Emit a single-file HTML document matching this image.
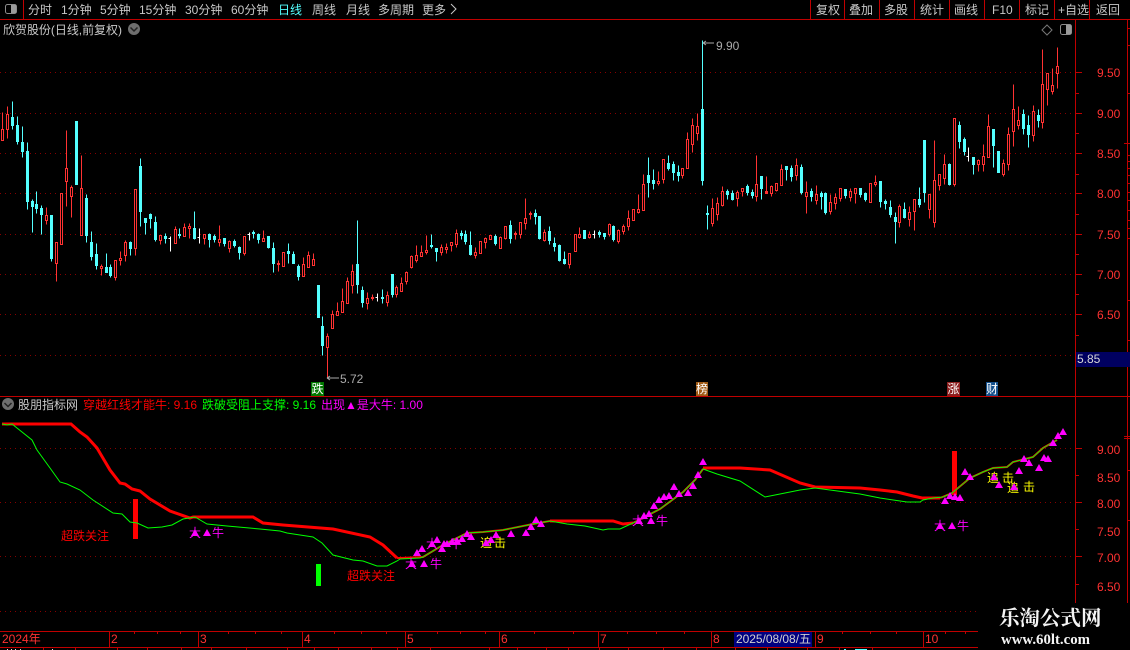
<!DOCTYPE html>
<html><head><meta charset="utf-8"><title>K</title>
<style>
html,body{margin:0;padding:0;background:#000;width:1130px;height:650px;overflow:hidden}
svg{display:block}
text{font-family:"Liberation Sans","WenQuanYi Zen Hei","Noto Sans CJK SC",sans-serif;font-size:12px;white-space:pre}
.m{fill:#c8c8c8}
.a{fill:#ff3232}
</style></head><body>
<svg width="1130" height="650" viewBox="0 0 1130 650" xmlns="http://www.w3.org/2000/svg">
<rect width="1130" height="650" fill="#000"/>

<!-- grid -->
<g stroke="#860000" stroke-dasharray="1 4" shape-rendering="crispEdges" fill="none">
<path d="M0 72.5H1075M0 113.5H1075M0 153.5H1075M0 193.5H1075M0 234.5H1075M0 274.5H1075M0 314.5H1075M0 355.5H1075M0 448.5H1075M0 502.5H1075M0 556.5H1075M0 611.5H1075"/>
</g>

<!-- frame -->
<g stroke="#c00000" shape-rendering="crispEdges" fill="none">
<path d="M0 19.5H1130M0 396.5H1130M0 631.5H978M0 647.5H978M1075.5 19V631M1127.5 19V631M23.5 0V19"/>
<path d="M810.5 0V19M844.5 0V19M879.5 0V19M914.5 0V19M949.5 0V19M984.5 0V19M1019.5 0V19M1054.5 0V19M1089.5 0V19"/>
<path d="M1075 72.5h7M1075 113.5h7M1075 153.5h7M1075 193.5h7M1075 234.5h7M1075 274.5h7M1075 314.5h7M1075 355.5h7M1075 93.5h4M1075 133.5h4M1075 174.5h4M1075 214.5h4M1075 254.5h4M1075 294.5h4M1075 335.5h4"/>
<path d="M1075 448.5h7M1075 475.5h4M1075 502.5h7M1075 529.5h4M1075 556.5h7M1075 584.5h4"/>
<path d="M1127 28.5h3M1127 45.5h3M1127 93.5h3M1124 143.5h6M1127 155.5h3M1127 161.5h3M1127 168.5h3M1127 175.5h3M1127 183.5h3M1127 192.5h3M1127 200.5h3M1127 210.5h3M1127 220.5h3M1127 228.5h3M1127 238.5h3M1127 300.5h3M1127 340.5h3M1124 436.5h6M1124 438.5h6M1127 470.5h3M1127 520.5h3"/>
<path d="M109.5 631V647M198.5 631V647M302.5 631V647M405.5 631V647M499.5 631V647M598.5 631V647M711.5 631V647M815.5 631V647M923.5 631V647"/>
<path d="M134.5 631v3M157.5 631v3M180.5 631v3M228.5 631v3M255.5 631v3M281.5 631v3M334.5 631v3M361.5 631v3M386.5 631v3M437.5 631v3M460.5 631v3M485.5 631v3M534.5 631v3M573.5 631v3M627.5 631v3M656.5 631v3M684.5 631v3M842.5 631v3M870.5 631v3M896.5 631v3M945.5 631v3M965.5 631v3"/>
<path d="M43.5 647v3M75.5 647v3M117.5 647v3M147.5 647v3M181.5 647v3M211.5 647v3M246.5 647v3M287.5 647v3M314.5 647v3M338.5 647v3M371.5 647v3M397.5 647v3M430.5 647v3M489.5 647v3M517.5 647v3M546.5 647v3M568.5 647v3M599.5 647v3M628.5 647v3M663.5 647v3M696.5 647v3M735.5 647v3M767.5 647v3M807.5 647v3M839.5 647v3M872.5 647v3"/>
</g>
<path d="M7 649h1v1h-1zM11 649h1v1h-1zM15 649h1v1h-1zM20 649h1v1h-1zM52 649h1v1h-1z" fill="#ddd"/>
<path d="M844 649h2v1h-2zM855 649h12v1h-12z" fill="#54ffff"/>

<!-- candles -->
<g transform="translate(.5 .5)" shape-rendering="crispEdges">
<path fill="#000" stroke="#ff3232" d="M2 112V129M1 129h2V140h-2zM7 106V114M7 129V138M6 114h2V129h-2zM46 207V215M46 220V224M45 215h2V220h-2zM56 263V281M55 242h2V263h-2zM61 193V193M60 193h2V244h-2zM66 130V168M66 181V206M65 168h2V181h-2zM71 185V187M71 196V217M70 187h2V196h-2zM80 188h2V235h-2zM81 155V188M101 264V266M101 268V275M100 266h2V268h-2zM115 277V280M114 260h2V277h-2zM120 251V258M120 260V265M119 258h2V260h-2zM125 240V242M125 255V261M124 242h2V255h-2zM135 248V255M134 189h2V248h-2zM160 240V244M159 235h2V240h-2zM175 226V229M174 229h2V243h-2zM184 223V227M183 227h2V236h-2zM189 223V226M189 228V238M188 226h2V228h-2zM204 238V244M203 234h2V238h-2zM219 225V239M219 242V246M218 239h2V242h-2zM229 240V241M229 248V252M228 241h2V248h-2zM244 253V255M243 236h2V253h-2zM263 230V238M262 238h2V241h-2zM278 260V263M278 264V271M277 263h2V264h-2zM282 252h2V266h-2zM303 257V264M302 264h2V276h-2zM308 251V255M307 255h2V267h-2zM313 253V259M312 259h2V265h-2z
M327 333V336M327 347V377M326 336h2V347h-2zM332 310V314M331 314h2V328h-2zM337 302V311M336 311h2V315h-2zM342 288V301M341 301h2V312h-2zM347 277V281M346 281h2V303h-2zM352 264V271M352 285V293M351 271h2V285h-2zM367 292V298M367 303V309M366 298h2V303h-2zM372 294V298M372 298V300M371 297h2V298h-2zM387 291V295M387 302V306M386 295h2V302h-2zM396 285V287M396 294V297M395 287h2V294h-2zM401 277V283M400 283h2V291h-2zM406 271V272M406 281V284M405 272h2V281h-2zM411 255V256M411 267V268M410 256h2V267h-2zM416 245V255M416 260V262M415 255h2V260h-2zM421 245V252M420 252h2V256h-2zM426 235V250M426 252V254M425 250h2V252h-2zM441 244V247M441 252V255M440 247h2V252h-2zM446 243V247M446 249V253M445 247h2V249h-2zM451 245V251M450 242h2V245h-2zM456 229V233M456 244V247M455 233h2V244h-2zM475 247V252M475 255V258M474 252h2V255h-2zM479 241h2V253h-2zM485 237V238M485 242V248M484 238h2V242h-2zM490 242V242M489 235h2V239h-2zM500 236V237M499 237h2V248h-2zM505 238V239M504 226h2V238h-2zM515 231V233M515 234V239M514 233h2V234h-2zM520 234V238M519 222h2V234h-2zM525 198V218M525 223V229M524 218h2V223h-2zM530 211V213M530 214V219M529 213h2V214h-2zM544 229V232M544 240V241M543 232h2V240h-2zM569 253V253M569 264V268M568 253h2V264h-2zM574 234h2V251h-2zM579 227V234M579 237V238M578 234h2V237h-2zM589 231V234M589 237V238M588 234h2V237h-2zM609 223V224M609 234V236M608 224h2V234h-2zM618 229V230M618 241V243M617 230h2V241h-2zM623 224V226M623 231V234M622 226h2V231h-2zM628 210V218M628 226V230M627 218h2V226h-2zM633 220V220M632 209h2V220h-2zM638 194V209M638 212V213M637 209h2V212h-2zM643 174V184M642 184h2V210h-2zM658 171V181M658 183V185M657 181h2V183h-2zM663 179V183M662 159h2V179h-2zM682 175V178M681 168h2V175h-2zM687 132V139M686 139h2V168h-2zM692 118V125M692 144V152M691 125h2V144h-2zM697 113V126M697 133V140M696 126h2V133h-2z
M712 198V208M712 223V226M711 208h2V223h-2zM717 197V203M717 214V220M716 203h2V214h-2zM722 186V191M722 205V206M721 191h2V205h-2zM737 190V192M737 198V206M736 192h2V198h-2zM742 191V196M741 188h2V191h-2zM756 155V184M756 196V201M755 184h2V196h-2zM766 176V191M766 191V193M765 191h2V193h-2zM771 185V186M771 193V196M770 186h2V193h-2zM776 190V191M775 183h2V190h-2zM781 164V169M780 169h2V185h-2zM796 158V165M796 175V180M795 165h2V175h-2zM806 181V192M806 196V213M805 192h2V196h-2zM816 185V194M816 200V204M815 194h2V200h-2zM830 194V202M830 211V214M829 202h2V211h-2zM835 193V197M835 203V209M834 197h2V203h-2zM840 198V201M839 188h2V198h-2zM850 188V191M850 197V201M849 191h2V197h-2zM855 193V203M854 188h2V193h-2zM870 183V183M869 183h2V202h-2zM875 175V182M875 184V186M874 182h2V184h-2zM899 204V206M899 222V227M898 206h2V222h-2zM909 206V212M909 219V226M908 212h2V219h-2zM914 211V230M913 199h2V211h-2zM929 209V218M928 194h2V209h-2zM934 140V180M934 222V227M933 180h2V222h-2zM939 185V190M938 174h2V185h-2zM944 154V164M944 178V184M943 164h2V178h-2zM954 184V186M953 118h2V184h-2zM978 159V160M978 164V171M977 160h2V164h-2zM983 144V156M983 164V171M982 156h2V164h-2zM988 114V126M987 126h2V157h-2zM1003 159V163M1003 174V176M1002 163h2V174h-2zM1008 127V134M1008 164V170M1007 134h2V164h-2zM1013 84V109M1013 131V146M1012 109h2V131h-2zM1018 106V120M1018 125V129M1017 120h2V125h-2zM1033 105V111M1033 135V141M1032 111h2V135h-2zM1042 49V84M1042 122V128M1041 84h2V122h-2zM1047 89V105M1046 73h2V89h-2zM1052 68V85M1052 91V94M1051 85h2V91h-2zM1057 47V66M1057 73V88M1056 66h2V73h-2z"/>
<path fill="#54ffff" stroke="#54ffff" d="M12 101V117M12 125V129M11 117h2V125h-2zM17 116V125M17 141V144M16 125h2V141h-2zM22 126V142M22 151V157M21 142h2V151h-2zM27 142V151M27 201V209M26 151h2V201h-2zM32 199V201M32 206V232M31 201h2V206h-2zM36 191V204M36 208V213M35 204h2V208h-2zM41 205V208M41 214V234M40 208h2V214h-2zM51 258V261M50 215h2V258h-2zM75 121h2V184h-2zM86 194V198M86 235V242M85 198h2V235h-2zM91 231V242M91 256V260M90 242h2V256h-2zM96 243V254M96 265V269M95 254h2V265h-2zM105 267h2V272h-2zM106 253V267M110 264V267M110 275V277M109 267h2V275h-2zM130 241V242M130 248V255M129 242h2V248h-2zM140 158V166M140 211V226M139 166h2V211h-2zM145 222V234M144 218h2V222h-2zM150 213V214M150 218V228M149 214h2V218h-2zM155 216V222M155 239V241M154 222h2V239h-2zM165 233V236M165 238V243M164 236h2V238h-2zM179 228V234M179 235V238M178 234h2V235h-2zM194 211V228M194 238V239M193 228h2V238h-2zM209 233V234M209 239V247M208 234h2V239h-2zM214 234V236M214 239V242M213 236h2V239h-2zM224 243V246M223 238h2V243h-2zM234 239V241M234 245V247M233 241h2V245h-2zM239 246V247M239 252V259M238 247h2V252h-2zM253 230V232M253 233V238M252 232h2V233h-2zM258 233V234M258 239V243M257 234h2V239h-2zM268 247V248M267 236h2V247h-2zM273 242V248M273 263V272M272 248h2V263h-2zM288 243V251M288 253V263M287 251h2V253h-2zM292 254h2V263h-2zM293 251V254M298 264V266M298 276V280M297 266h2V276h-2z
M317 285h2V317h-2zM322 316V326M322 345V355M321 326h2V345h-2zM357 220V264M357 284V293M356 264h2V284h-2zM362 286V290M362 302V307M361 290h2V302h-2zM382 289V297M382 298V303M381 297h2V298h-2zM392 294V297M391 274h2V294h-2zM431 234V245M431 246V248M430 245h2V246h-2zM436 251V261M435 248h2V251h-2zM461 230V233M461 235V239M460 233h2V235h-2zM465 230V234M465 241V244M464 234h2V241h-2zM470 231V245M470 254V255M469 245h2V254h-2zM495 234V236M495 243V245M494 236h2V243h-2zM510 220V225M510 238V243M509 225h2V238h-2zM535 209V213M535 216V224M534 213h2V216h-2zM539 238V239M538 216h2V238h-2zM549 226V231M549 240V244M548 231h2V240h-2zM554 237V243M554 246V251M553 243h2V246h-2zM559 244V245M559 260V261M558 245h2V260h-2zM564 251V259M564 263V264M563 259h2V263h-2zM584 230V238M583 230h2V238h-2zM594 230V234M599 230V232M599 234V237M598 232h2V234h-2zM604 236V239M603 233h2V236h-2zM613 225V226M613 239V241M612 226h2V239h-2z
M648 157V175M648 182V197M647 175h2V182h-2zM653 169V180M653 183V189M652 180h2V183h-2zM668 155V163M668 168V170M667 163h2V168h-2zM673 161V164M673 172V180M672 164h2V172h-2zM678 165V172M678 175V181M677 172h2V175h-2zM702 40V109M702 180V185M701 109h2V180h-2zM707 205V213M707 214V229M706 213h2V214h-2zM727 189V191M727 194V199M726 191h2V194h-2zM732 190V193M732 199V200M731 193h2V199h-2zM747 184V186M747 192V195M746 186h2V192h-2zM752 189V192M752 195V198M751 192h2V195h-2zM761 188V199M760 176h2V188h-2zM786 169V180M785 166h2V169h-2zM791 165V168M791 176V181M790 168h2V176h-2zM801 164V167M801 192V194M800 167h2V192h-2zM811 188V191M811 196V201M810 191h2V196h-2zM821 191V193M821 196V209M820 193h2V196h-2zM825 192V193M825 212V214M824 193h2V212h-2zM845 189V189M845 195V198M844 189h2V195h-2zM860 194V197M859 188h2V194h-2zM865 192V193M865 199V201M864 193h2V199h-2zM880 201V207M879 181h2V201h-2zM885 199V201M885 203V209M884 201h2V203h-2zM890 200V207M890 214V217M889 207h2V214h-2zM895 212V217M895 221V243M894 217h2V221h-2zM904 202V209M904 217V218M903 209h2V217h-2zM919 187V199M919 204V207M918 199h2V204h-2zM924 192V202M923 140h2V192h-2zM949 163V164M949 184V185M948 164h2V184h-2zM959 121V125M959 141V148M958 125h2V141h-2zM964 137V139M964 151V155M963 139h2V151h-2zM973 164V174M972 157h2V164h-2zM993 145V167M992 129h2V145h-2zM997 151h2V172h-2zM1023 109V114M1023 128V134M1022 114h2V128h-2zM1028 115V125M1028 134V147M1027 125h2V134h-2zM1038 109V115M1038 120V127M1037 115h2V120h-2z"/>
<path fill="none" stroke="#fff" d="M170 236V251M168 238h2M199 228V243M197 237h2M249 232V240M247 234h2M377 293V301M375 297h2M594 230V238M592 234h2M968 147V161M966 156h2"/>
</g>

<!-- top bar -->
<g>
<rect x="5.500" y="4.500" width="11" height="9" rx="2" fill="none" stroke="#8c8c8c"/><rect x="11" y="5" width="5" height="8" fill="#9a9a9a"/>
<text class="m" x="28" y="14">分时</text>
<text class="m" x="61" y="14">1分钟</text>
<text class="m" x="100" y="14">5分钟</text>
<text class="m" x="139" y="14">15分钟</text>
<text class="m" x="185" y="14">30分钟</text>
<text class="m" x="231" y="14">60分钟</text>
<text x="278" y="14" fill="#54ffff">日线</text>
<text class="m" x="312" y="14">周线</text>
<text class="m" x="346" y="14">月线</text>
<text class="m" x="378" y="14">多周期</text>
<text class="m" x="422" y="14">更多</text>
<path d="M451 4l5 5-5 5" fill="none" stroke="#c8c8c8"/>
<text class="m" x="816" y="14">复权</text>
<text class="m" x="849" y="14">叠加</text>
<text class="m" x="884" y="14">多股</text>
<text class="m" x="920" y="14">统计</text>
<text class="m" x="954" y="14">画线</text>
<text class="m" x="992" y="14">F10</text>
<text class="m" x="1025" y="14">标记</text>
<text class="m" x="1058" y="14">+自选</text>
<text class="m" x="1096" y="14">返回</text>
</g>

<!-- title -->
<text class="m" x="3" y="34" textLength="119" lengthAdjust="spacing">欣贺股份(日线,前复权)</text>
<circle cx="134" cy="29" r="6" fill="#6e6e6e"/><path d="M130.500 27.500l3.500 3.500 3.500-3.500" fill="none" stroke="#222" stroke-width="1.500"/>
<path d="M1047 25l5 5-5 5-5-5z" fill="none" stroke="#777"/>
<rect x="1060.500" y="24.500" width="11" height="10" rx="2" fill="none" stroke="#8c8c8c"/><rect x="1066" y="25" width="5" height="9" fill="#9a9a9a"/>

<!-- price labels -->
<text class="a" x="1097" y="77">9.50</text>
<text class="a" x="1097" y="118">9.00</text>
<text class="a" x="1097" y="158">8.50</text>
<text class="a" x="1097" y="198">8.00</text>
<text class="a" x="1097" y="239">7.50</text>
<text class="a" x="1097" y="279">7.00</text>
<text class="a" x="1097" y="319">6.50</text>
<rect x="1076" y="352" width="54" height="15" fill="#000060"/>
<text x="1077" y="363" fill="#d8d8d8">5.85</text>

<!-- high/low -->
<path d="M703 43h11M703 43l3-2M703 43l3 2" fill="none" stroke="#aaa"/>
<text fill="#aaa" x="716" y="50">9.90</text>
<path d="M327 378h12M327 378l3-2M327 378l3 2" fill="none" stroke="#aaa"/>
<text fill="#aaa" x="340" y="383">5.72</text>

<!-- event tags -->
<rect x="311" y="382" width="13" height="14" fill="#007800"/><text x="311.500" y="393" fill="#fff">跌</text>
<rect x="696" y="382" width="12" height="14" fill="#a05a14"/><text x="696" y="393" fill="#fff">榜</text>
<rect x="947" y="382" width="13" height="14" fill="#8c1e1e"/><text x="947.500" y="393" fill="#fff">涨</text>
<rect x="986" y="382" width="12" height="14" fill="#14508c"/><text x="986" y="393" fill="#fff">财</text>

<!-- indicator legend -->
<circle cx="8" cy="404" r="6" fill="#6e6e6e"/><path d="M4.500 403l3.500 3.500 3.500-3.500" fill="none" stroke="#222" stroke-width="1.500"/>
<text class="m" x="18" y="409">股朋指标网</text>
<text x="83" y="409" fill="#ff0000">穿越红线才能牛: 9.16</text>
<text x="202" y="409" fill="#00ff00">跌破受阻上支撑: 9.16</text>
<text x="321" y="409" fill="#ff00ff">出现▲是大牛: 1.00</text>

<!-- indicator labels -->
<text class="a" x="1097" y="454">9.00</text>
<text class="a" x="1097" y="482">8.50</text>
<text class="a" x="1097" y="508">8.00</text>
<text class="a" x="1097" y="536">7.50</text>
<text class="a" x="1097" y="562">7.00</text>
<text class="a" x="1097" y="591">6.50</text>

<!-- bars -->
<rect x="133" y="499" width="5" height="40" fill="#ff0000"/>
<rect x="316" y="564" width="5" height="22" fill="#00ff00"/>
<rect x="952" y="451" width="5" height="44" fill="#ff0000"/>

<!-- indicator lines -->
<polyline fill="none" stroke="#ff0000" stroke-width="3" points="2,424 71,424 80,432 87,437 97,448 110,470 120,483 125,484 132,489 140,491 150,499 170,511 190,518 193,517 253,517 263,523 283,525 333,529 370,537 383,545 397,558"/>
<polyline fill="none" stroke="#ff0000" stroke-width="2" points="397,558 400,558 423,557 443,545 467,533 483,532 503,530 533,524 550,521"/>
<polyline fill="none" stroke="#ff0000" stroke-width="3" points="550,521 613,521 623,524 633,523"/>
<polyline fill="none" stroke="#ff0000" stroke-width="2" points="633,523 660,509 683,492 695,480 703,469"/>
<polyline fill="none" stroke="#ff0000" stroke-width="3" points="703,468 740,468 770,470 800,483 815,487 860,488 880,490 897,492 913,496 922,498 940,498"/>
<polyline fill="none" stroke="#ff0000" stroke-width="2" points="940,498 952,493 970,478 983,472 993,468 1007,467 1013,462 1033,457 1043,448 1057,440"/>
<polyline fill="none" stroke="#00ff00" stroke-width="1" points="2,424 7,425 12,424 17,428 32,440 37,450 50,468 60,482 67,484 80,490 93,500 113,513 122,514 130,522 137,523 148,528 162,527 172,525 183,519 195,517 207,524 227,526 260,529 280,531 287,533 313,537 322,543 333,555 353,560 363,561 377,566 387,566 397,561 400,559 420,558 423,557 443,545 467,533 483,532 503,530 533,524 550,521 567,524 585,526 603,530 608,529 620,529 633,523 660,509 683,492 695,480 703,469 717,474 740,481 765,497 775,495 800,490 815,488 860,494 880,498 907,502 920,502 923,500 933,498 943,497 952,493 970,478 983,472 993,468 1007,467 1013,462 1033,457 1043,448 1057,440"/>

<!-- text markers -->
<g fill="#ff0000">
<text x="61" y="540">超跌关注</text>
<text x="347" y="580">超跌关注</text>
</g>
<g fill="#ff00ff">
<text x="189" y="537">大</text><text x="212" y="537">牛</text>
<text x="405" y="568">大</text><text x="430" y="568">牛</text>
<text x="426" y="548">大</text><text x="450" y="548">牛</text>
<text x="632" y="525">大</text><text x="656" y="525">牛</text>
<text x="934" y="530">大</text><text x="957" y="530">牛</text>
</g>
<g fill="#ffff00">
<text x="480" y="547">追</text><text x="494" y="547">击</text>
<text x="987" y="482">追</text><text x="1002" y="482">击</text>
<text x="1007" y="492">追</text><text x="1023" y="491">击</text>
</g>

<!-- triangles -->
<path fill="#ff00ff" d="M195 529l4 7h-8zM207 529l4 7h-8zM412 560l4 7h-8zM424 560l4 7h-8zM417 549l4 7h-8zM422 545l4 7h-8zM432 540l4 7h-8zM437 536l4 7h-8zM442 545l4 7h-8zM444 540l4 7h-8zM447 540l4 7h-8zM452 538l4 7h-8zM457 537l4 7h-8zM462 535l4 7h-8zM467 530l4 7h-8zM471 533l4 7h-8zM486 539l4 7h-8zM491 536l4 7h-8zM496 531l4 7h-8zM511 530l4 7h-8zM526 529l4 7h-8zM531 523l4 7h-8zM536 516l4 7h-8zM541 520l4 7h-8zM639 517l4 7h-8zM644 512l4 7h-8zM649 510l4 7h-8zM651 517l4 7h-8zM654 502l4 7h-8zM659 496l4 7h-8zM664 493l4 7h-8zM669 492l4 7h-8zM674 483l4 7h-8zM679 490l4 7h-8zM688 489l4 7h-8zM693 482l4 7h-8zM698 471l4 7h-8zM703 458l4 7h-8zM940 522l4 7h-8zM952 522l4 7h-8zM945 497l4 7h-8zM950 492l4 7h-8zM955 493l4 7h-8zM960 494l4 7h-8zM965 468l4 7h-8zM970 473l4 7h-8zM994 473l4 7h-8zM999 481l4 7h-8zM1014 483l4 7h-8zM1019 467l4 7h-8zM1024 455l4 7h-8zM1029 459l4 7h-8zM1039 464l4 7h-8zM1044 454l4 7h-8zM1048 455l4 7h-8zM1053 439l4 7h-8zM1058 432l4 7h-8zM1063 428l4 7h-8z"/>

<!-- time axis -->
<text class="a" x="2" y="643">2024年</text>
<text class="a" x="111" y="643">2</text>
<text class="a" x="200" y="643">3</text>
<text class="a" x="304" y="643">4</text>
<text class="a" x="407" y="643">5</text>
<text class="a" x="501" y="643">6</text>
<text class="a" x="600" y="643">7</text>
<text class="a" x="713" y="643">8</text>
<rect x="734" y="632" width="78" height="15" fill="#000080"/>
<text x="736" y="643" fill="#d0d0d0" textLength="75" lengthAdjust="spacing">2025/08/08/五</text>
<text class="a" x="817" y="643">9</text>
<text class="a" x="925" y="643">10</text>

<!-- watermark -->
<rect x="978" y="603" width="152" height="47" fill="#000"/>
<text x="999" y="625" fill="#f4f4f4" style="font-family:'Noto Serif CJK SC','Liberation Serif',serif;font-size:20.500px;font-weight:700">乐淘公式网</text>
<text x="1001" y="644" fill="#f4f4f4" textLength="89" lengthAdjust="spacingAndGlyphs" style="font-family:'Liberation Serif',serif;font-size:14.500px;font-weight:700">www.60lt.com</text>
</svg>
</body></html>
